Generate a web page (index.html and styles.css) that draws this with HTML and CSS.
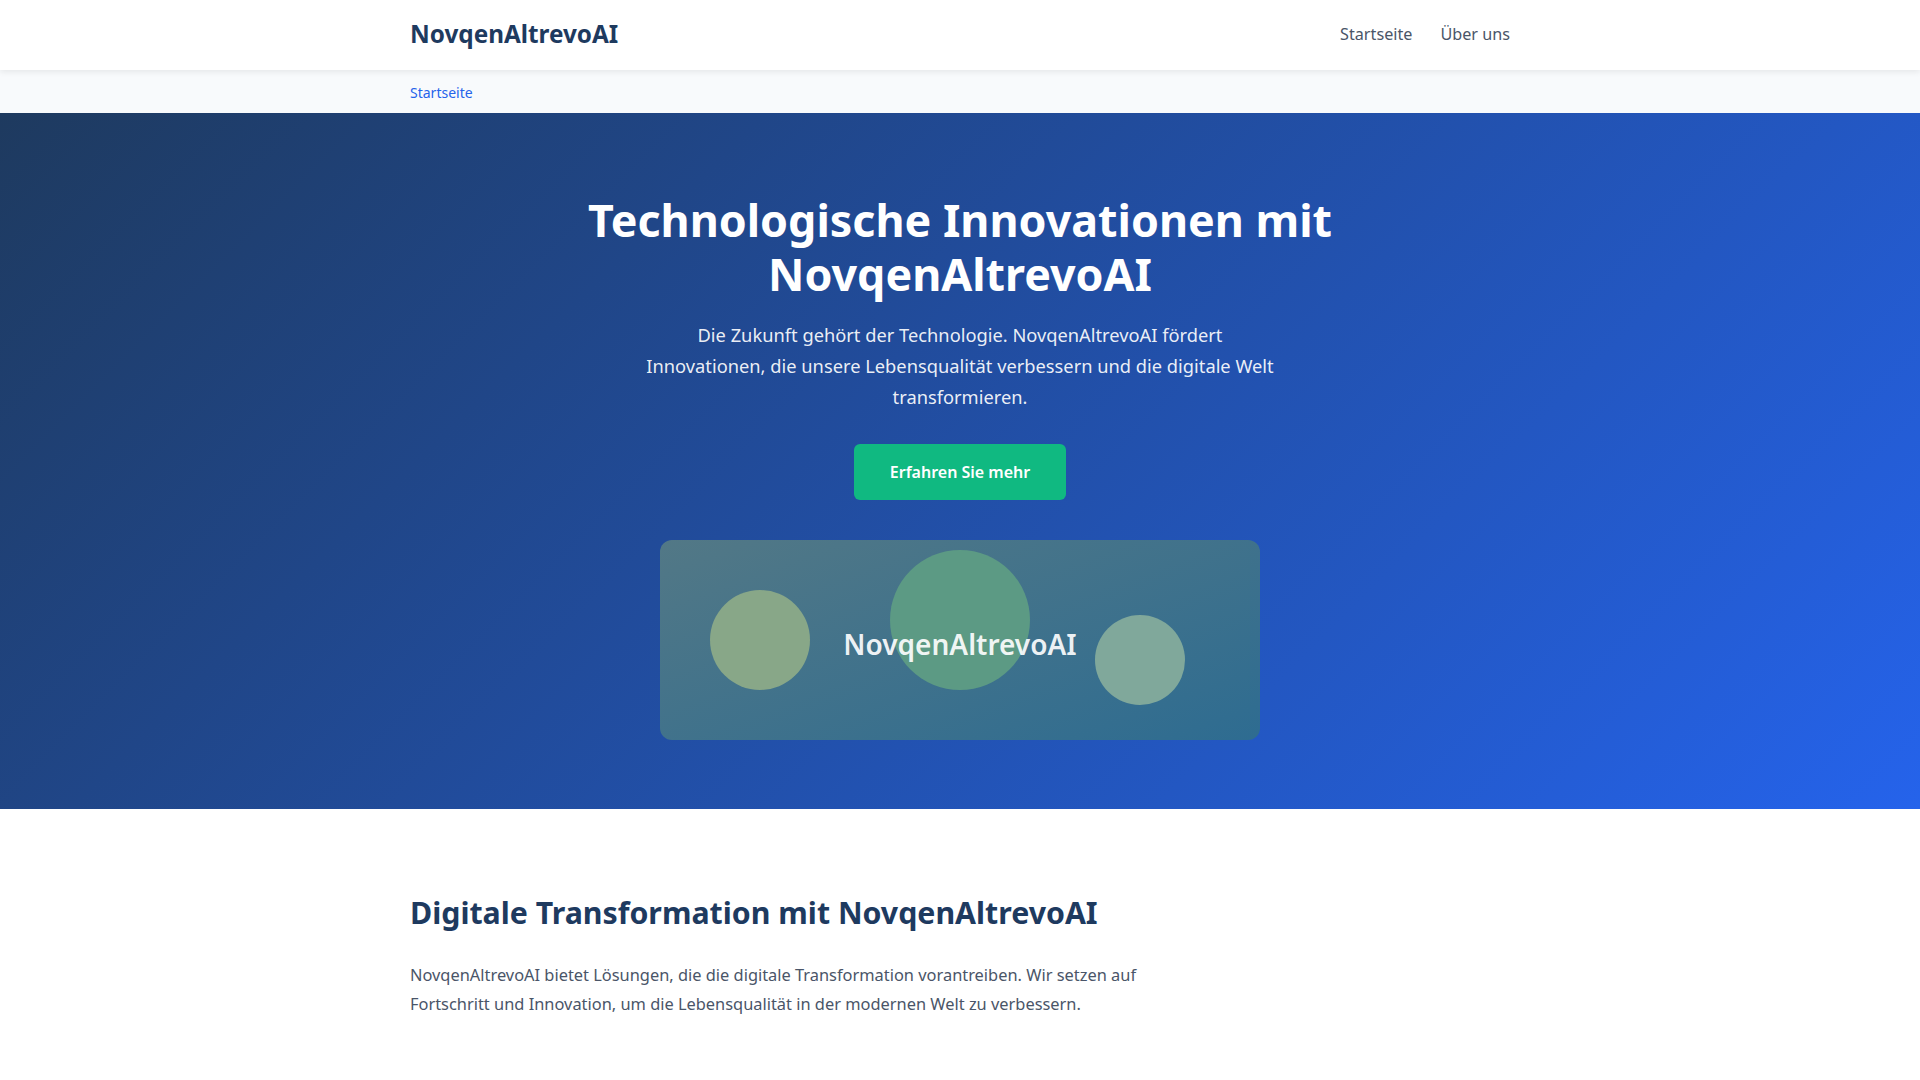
FILE: index.html
```html
<!DOCTYPE html>
<html lang="de">
<head>
<meta charset="utf-8">
<title>NovqenAltrevoAI</title>
<link rel="stylesheet" href="styles.css">
</head>
<body>
<header class="site-header">
  <div class="container header-inner">
    <a class="logo" href="#">NovqenAltrevoAI</a>
    <nav class="main-nav">
      <a href="#">Startseite</a>
      <a href="#">Über uns</a>
    </nav>
  </div>
</header>
<div class="breadcrumb">
  <div class="container">
    <a href="#">Startseite</a>
  </div>
</div>
<section class="hero">
  <div class="hero-inner">
    <h1 class="hero-title">Technologische Innovationen mit NovqenAltrevoAI</h1>
    <p class="hero-text">Die Zukunft gehört der Technologie. NovqenAltrevoAI fördert Innovationen, die unsere Lebensqualität verbessern und die digitale Welt transformieren.</p>
    <a class="btn" href="#">Erfahren Sie mehr</a>
    <div class="hero-card">
      <span class="circle circle-a"></span>
      <span class="circle circle-b"></span>
      <span class="circle circle-c"></span>
      <span class="card-label">NovqenAltrevoAI</span>
    </div>
  </div>
</section>
<section class="content">
  <div class="container">
    <h2 class="content-title">Digitale Transformation mit NovqenAltrevoAI</h2>
    <p class="content-text">NovqenAltrevoAI bietet Lösungen, die die digitale Transformation vorantreiben. Wir setzen auf Fortschritt und Innovation, um die Lebensqualität in der modernen Welt zu verbessern.</p>
  </div>
</section>
</body>
</html>
```

FILE: styles.css
```css
* { box-sizing: border-box; }
html, body { margin: 0; padding: 0; }
body {
  font-family: "Noto Sans", "Open Sans", sans-serif;
  color: #4a5568;
  background: #ffffff;
}
a { text-decoration: none; }

.container {
  max-width: 1100px;
  margin: 0 auto;
}

.site-header {
  position: relative;
  z-index: 2;
  background: #ffffff;
  box-shadow: 0 2px 6px rgba(0, 0, 0, 0.08);
}
.header-inner {
  height: 70px;
  padding-bottom: 2px;
  display: flex;
  align-items: center;
  justify-content: space-between;
}
.logo {
  font-size: 24.3px;
  font-weight: 700;
  color: #1e3a5f;
  line-height: 1;
}
.main-nav {
  display: flex;
  gap: 28px;
}
.main-nav a {
  font-size: 16.2px;
  color: #4a5568;
  line-height: 1;
}

.breadcrumb {
  background: #f8fafc;
  height: 43px;
  display: flex;
  align-items: center;
}
.breadcrumb .container { width: 100%; }
.breadcrumb a {
  font-size: 14px;
  color: #2563eb;
}

.hero {
  background: linear-gradient(135deg, #1e3a5f 0%, #2563eb 100%);
  padding: 80px 20px 69px;
  color: #ffffff;
}
.hero-inner {
  display: flex;
  flex-direction: column;
  align-items: center;
  text-align: center;
}
.hero-title {
  margin: 0;
  font-size: 44.8px;
  line-height: 53.8px;
  font-weight: 700;
  max-width: 800px;
}
.hero-text {
  margin: 18px 0 0;
  max-width: 636px;
  font-size: 18.3px;
  line-height: 31px;
  color: rgba(255, 255, 255, 0.92);
}
.btn {
  margin-top: 32px;
  display: inline-block;
  background: #10b981;
  color: #ffffff;
  font-size: 16px;
  font-weight: 600;
  line-height: 22px;
  padding: 17px 36px;
  border-radius: 6px;
}
.hero-card {
  position: relative;
  margin-top: 40px;
  width: 600px;
  height: 200px;
  border-radius: 12px;
  background: linear-gradient(160deg, #527886 0%, #2e6c91 100%);
  display: flex;
  align-items: center;
  justify-content: center;
  overflow: hidden;
}
.circle {
  position: absolute;
  border-radius: 50%;
}
.circle-a {
  left: 50px; top: 50px;
  width: 100px; height: 100px;
  background: #88a788;
}
.circle-b {
  left: 230px; top: 10px;
  width: 140px; height: 140px;
  background: #5c9a84;
}
.circle-c {
  left: 435px; top: 75px;
  width: 90px; height: 90px;
  background: #80a89b;
}
.card-label {
  position: relative;
  font-size: 28px;
  font-weight: 600;
  color: rgba(255, 255, 255, 0.92);
  margin-top: 8px;
}

.content {
  padding: 86px 0 60px;
}
.content-title {
  margin: 0;
  font-size: 30.3px;
  line-height: 36.4px;
  font-weight: 700;
  color: #1e3a5f;
}
.content-text {
  margin: 29px 0 0;
  max-width: 800px;
  font-size: 16.4px;
  line-height: 29px;
  color: #4a5568;
}
```
